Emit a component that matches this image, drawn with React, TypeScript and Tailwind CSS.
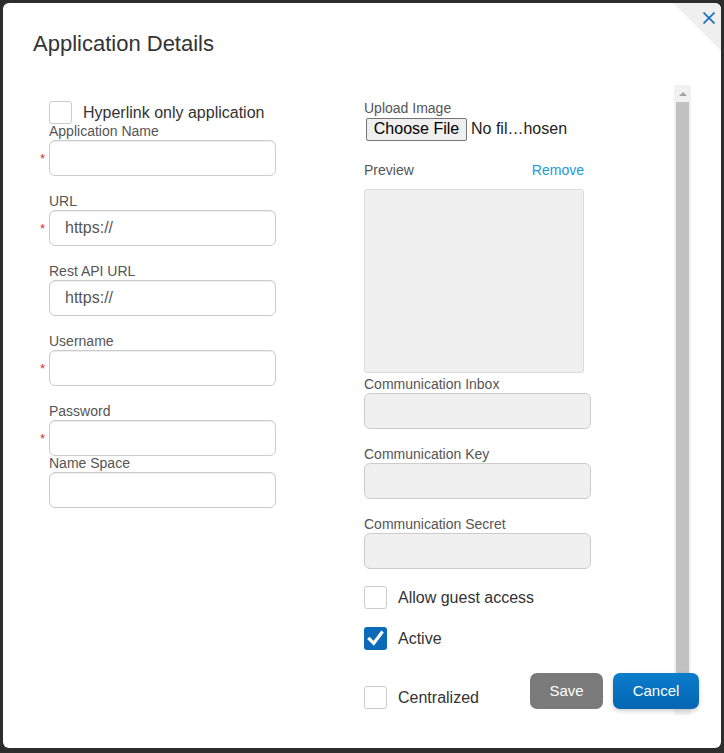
const font = "font-['Liberation_Sans',Arial,sans-serif]"

const Checkbox = ({ checked, label }: { checked?: boolean; label: string }) => (
    <div className="flex items-center gap-[11px]">
        {checked ? (
            <div className="flex h-[23px] w-[23px] items-center justify-center rounded-[3px] bg-[#0c6bb8]">
                <svg viewBox="0 0 24 24" className="h-[21px] w-[21px]" fill="none" stroke="white" strokeWidth="3.6" strokeLinecap="square">
                    <polyline points="5,12.5 10,17.5 19,5.5" />
                </svg>
            </div>
        ) : (
            <div className="h-[23px] w-[23px] rounded-[3px] border border-[#ccc] bg-white" />
        )}
        <span className="text-[16px] leading-[20px] text-[#333]">{label}</span>
    </div>
)

const Field = ({ label, required, value, className = "" }: { label: string; required?: boolean; value?: string; className?: string }) => (
    <div className={className}>
        <div className="ml-[9px] text-[14px] leading-[17px] text-[#555]">{label}</div>
        <div className="flex items-center">
            <span className="w-[9px] text-[13px] leading-none text-[#d9342b]">{required ? "*" : ""}</span>
            <input
                readOnly
                defaultValue={value}
                className="h-[36px] w-[227px] rounded-[6px] border border-[#ccc] bg-white px-[15px] text-[16px] text-[#555] shadow-[inset_0_1px_1px_rgba(0,0,0,0.075)] outline-none"
            />
        </div>
    </div>
)

const GrayField = ({ label, className = "" }: { label: string; className?: string }) => (
    <div className={className}>
        <div className="text-[14px] leading-[17px] text-[#555]">{label}</div>
        <div className="h-[36px] w-[227px] rounded-[6px] border border-[#ccc] bg-[#f0f0f0]" />
    </div>
)

export default function App() {
    return (
        <div className={`h-[753px] w-[724px] bg-[#2d2d2d] pl-[3px] pt-[3px] ${font}`}>
            <div className="relative h-[745px] w-[718px] overflow-hidden rounded-[6px] bg-white">
                {/* close corner */}
                <div className="absolute right-0 top-0 h-[48px] w-[48px] bg-[#efefef] [clip-path:polygon(0_0,100%_0,100%_100%)]" />
                <svg viewBox="0 0 12 12" className="absolute left-[700px] top-[9px] h-[12px] w-[12px]" stroke="#1a6fc0" strokeWidth="1.7">
                    <line x1="0.5" y1="0.5" x2="11.5" y2="11.5" />
                    <line x1="11.5" y1="0.5" x2="0.5" y2="11.5" />
                </svg>

                <h1 className="pl-[30px] pt-[28px] text-[22px] leading-[25px] text-[#333]">Application Details</h1>

                <div className="ml-[37px] mt-[29px] flex h-[630px]">
                    {/* left column */}
                    <div className="w-[236px] pt-[16px]">
                        <div className="ml-[9px] h-[22px]">
                            <Checkbox label="Hyperlink only application" />
                        </div>
                        <Field label="Application Name" required />
                        <Field label="URL" required value="https://" className="mt-[17px]" />
                        <Field label="Rest API URL" value="https://" className="mt-[17px]" />
                        <Field label="Username" required className="mt-[17px]" />
                        <Field label="Password" required className="mt-[17px]" />
                        <Field label="Name Space" className="-mt-px" />
                    </div>

                    {/* right column */}
                    <div className="ml-[88px] w-[227px] pt-[15px]">
                        <div className="text-[14px] leading-[17px] text-[#555]">Upload Image</div>
                        <div className="ml-[2px] flex items-center gap-[4px]">
                            <div className="flex h-[23px] w-[101px] items-center justify-center rounded-[2px] border border-[#767676] bg-[#efefef] text-[16px] text-black">
                                Choose File
                            </div>
                            <span className="text-[16px] text-[#222]">No fil…hosen</span>
                        </div>
                        <div className="mt-[21px] flex w-[220px] justify-between text-[14px] leading-[17px]">
                            <span className="text-[#555]">Preview</span>
                            <span className="text-[#1b9ad6]">Remove</span>
                        </div>
                        <div className="mt-[10px] h-[184px] w-[220px] rounded-[3px] border border-[#ddd] bg-[#f0f0f0]" />
                        <GrayField label="Communication Inbox" className="mt-[3px]" />
                        <GrayField label="Communication Key" className="mt-[17px]" />
                        <GrayField label="Communication Secret" className="mt-[17px]" />
                        <div className="mt-[17px]">
                            <Checkbox label="Allow guest access" />
                        </div>
                        <div className="mt-[18px]">
                            <Checkbox checked label="Active" />
                        </div>
                        <div className="mt-[36px]">
                            <Checkbox label="Centralized" />
                        </div>
                    </div>

                    {/* scrollbar */}
                    <div className="ml-[83px] flex w-[17px] flex-col bg-[#f1f1f1]">
                        <div className="flex h-[17px] items-center justify-center">
                            <div className="h-0 w-0 border-x-[4px] border-b-[4px] border-x-transparent border-b-[#a3a3a3]" />
                        </div>
                        <div className="mx-[2px] flex-1 bg-[#c1c1c1]" />
                        <div className="h-[17px]" />
                    </div>
                </div>

                {/* footer buttons */}
                <div className="absolute bottom-[39px] right-[22px] flex gap-[10px]">
                    <button className="h-[36px] w-[73px] rounded-[7px] bg-[#7a7a7a] text-[15px] text-white">Save</button>
                    <button className="h-[36px] w-[86px] rounded-[7px] bg-gradient-to-b from-[#0b7dcc] to-[#0566b3] text-[15px] text-white shadow-[0_2px_4px_rgba(0,0,0,0.2)]">
                        Cancel
                    </button>
                </div>
            </div>
        </div>
    )
}
